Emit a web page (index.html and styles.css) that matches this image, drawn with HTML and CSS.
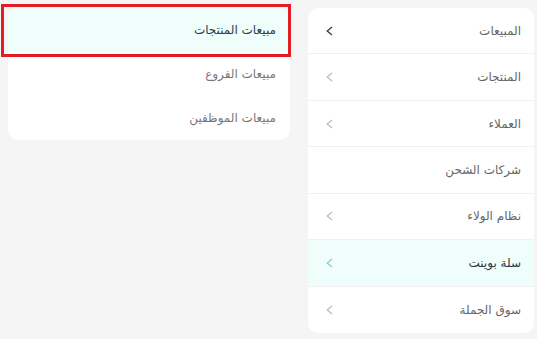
FILE: index.html
```html
<!DOCTYPE html>
<html lang="ar" dir="rtl">
<head>
<meta charset="utf-8">
<link rel="stylesheet" href="styles.css">
</head>
<body>
<div class="page">
  <nav class="menu">
    <div class="menu-item"><span>المبيعات</span><svg class="chev dark" viewBox="0 0 7 10"><path d="M6 1 L1.2 5 L6 9"/></svg></div>
    <div class="menu-item"><span>المنتجات</span><svg class="chev" viewBox="0 0 7 10"><path d="M6 1 L1.2 5 L6 9"/></svg></div>
    <div class="menu-item"><span>العملاء</span><svg class="chev" viewBox="0 0 7 10"><path d="M6 1 L1.2 5 L6 9"/></svg></div>
    <div class="menu-item"><span>شركات الشحن</span></div>
    <div class="menu-item"><span>نظام الولاء</span><svg class="chev" viewBox="0 0 7 10"><path d="M6 1 L1.2 5 L6 9"/></svg></div>
    <div class="menu-item active"><span>سلة بوينت</span><svg class="chev teal" viewBox="0 0 7 10"><path d="M6 1 L1.2 5 L6 9"/></svg></div>
    <div class="menu-item last"><span>سوق الجملة</span><svg class="chev" viewBox="0 0 7 10"><path d="M6 1 L1.2 5 L6 9"/></svg></div>
  </nav>
  <div class="sub">
    <div class="sub-item active">مبيعات المنتجات</div>
    <div class="sub-item">مبيعات الفروع</div>
    <div class="sub-item">مبيعات الموظفين</div>
  </div>
</div>
<div class="mark"></div>
</body>
</html>
```

FILE: styles.css
```css
html, body {
  margin: 0;
  padding: 0;
  background: #f5f5f5;
  font-family: "DejaVu Sans", "Noto Sans", sans-serif;
}
.page {
  display: flex;
  align-items: flex-start;
  gap: 18px;
  padding: 8px 3px 0 8px;
}
.menu {
  width: 226px;
  flex: none;
  background: #fff;
  border-radius: 10px;
  overflow: hidden;
}
.menu-item {
  box-sizing: border-box;
  height: 46.43px;
  display: flex;
  align-items: center;
  justify-content: space-between;
  padding: 0 13px 0 18px;
  border-bottom: 1px solid #f1f1f1;
  font-size: 12px;
  color: #666;
}
.menu-item.last { border-bottom: none; }
.menu-item.active { background: #effdfb; color: #263845; }
.chev {
  width: 7px;
  height: 10px;
  fill: none;
  stroke: #b8b8b8;
  stroke-width: 1.1;
}
.chev.dark { stroke: #3a3a3a; stroke-width: 1.3; }
.chev.teal { stroke: #86cbc8; }
.sub {
  flex: 1;
  background: #fff;
  border-radius: 10px;
  overflow: hidden;
}
.sub-item {
  height: 44px;
  display: flex;
  align-items: center;
  padding: 0 14px;
  font-size: 12px;
  color: #777;
}
.sub-item.active { background: #effdfb; color: #27404e; }
.mark {
  position: absolute;
  left: 1px;
  top: 4px;
  width: 284px;
  height: 47px;
  border: 3px solid #e21d24;
}
```
